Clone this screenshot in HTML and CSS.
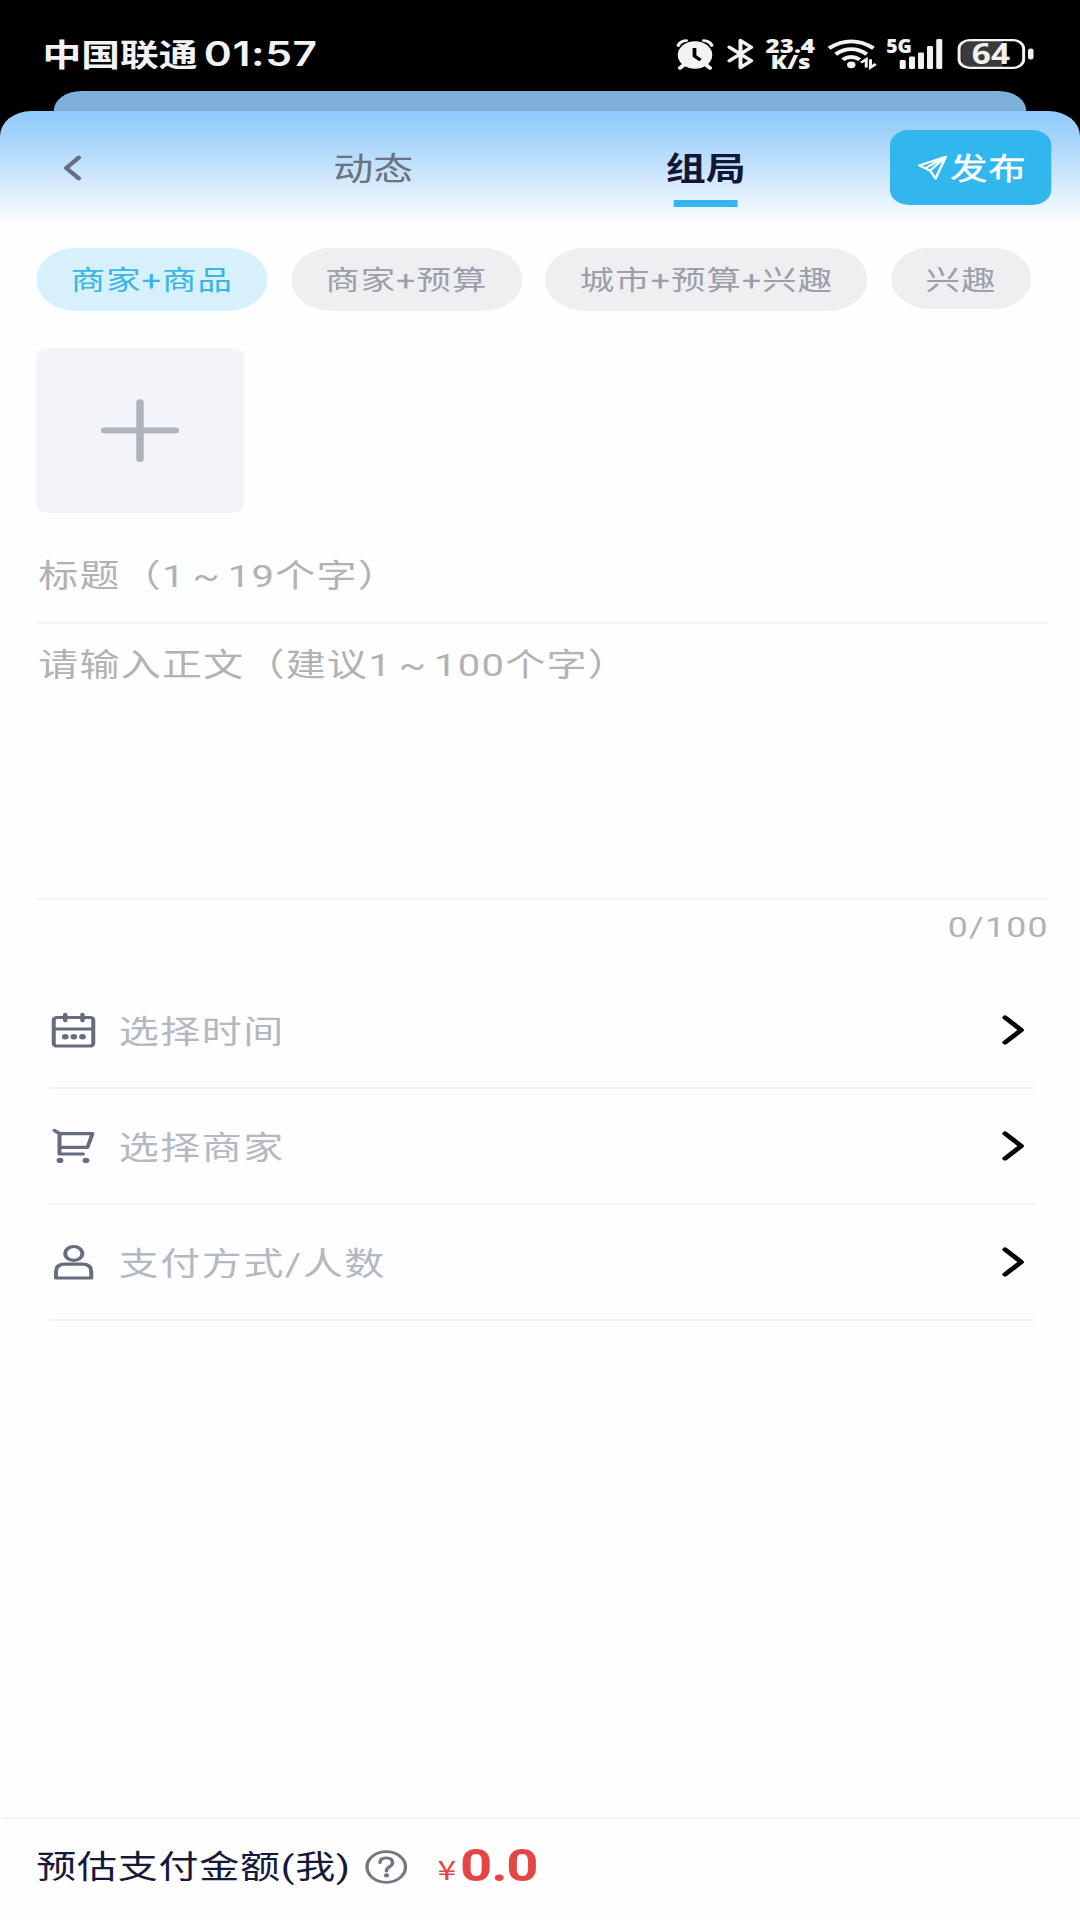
FILE: index.html
```html
<!DOCTYPE html>
<html lang="zh-CN">
<head>
<meta charset="utf-8">
<title>组局</title>
<link rel="stylesheet" href="styles.css">
</head>
<body>
<div class="stage">
  <div class="status">
    <span class="carrier">中国联通</span>
    <span class="clock">01:57</span>
    <div class="status-icons">
      <svg class="i-alarm" width="30" height="32" viewBox="0 0 30 32">
        <circle cx="15" cy="17" r="13.8" fill="#f2f2f2"/>
        <path d="M1.6 7.5Q3 3 8 2.6M28.4 7.5Q27 3 22 2.6" fill="none" stroke="#f2f2f2" stroke-width="2.8" stroke-linecap="round"/>
        <path d="M6 27l-3 3M24 27l3 3" stroke="#f2f2f2" stroke-width="3.4" stroke-linecap="round"/>
        <path d="M14.6 10v8l4.8 4.2" fill="none" stroke="#000" stroke-width="3"/>
      </svg>
      <svg class="i-bt" width="21" height="32" viewBox="0 0 21 32">
        <path d="M1.5 9.2L19 22.8 10.4 29.6V2.4L19 9.2 1.5 22.8" fill="none" stroke="#f2f2f2" stroke-width="3.2" stroke-linejoin="round" stroke-linecap="round"/>
      </svg>
      <svg class="i-speed" width="42" height="32" viewBox="0 0 42 32">
        <text class="net" x="0.5" y="14.8" textLength="39.5" lengthAdjust="spacingAndGlyphs">23.4</text>
        <text class="net" x="4.5" y="31" textLength="32" lengthAdjust="spacingAndGlyphs">K/s</text>
      </svg>
      <svg class="i-wifi" width="40" height="32" viewBox="0 0 40 32">
        <g fill="none" stroke="#f2f2f2" stroke-width="3.7">
          <path d="M1.2 10.2Q19 -3.6 36.8 10.2"/>
          <path d="M6.6 16.2Q19 6.2 31.4 16.2"/>
          <path d="M12.2 21.6Q19 16.4 25.8 21.6"/>
        </g>
        <circle cx="19" cy="26.8" r="3.4" fill="#f2f2f2"/>
        <path d="M26.8 24.6L31 21.2V29.6M38.6 26L34.4 29.4V21.2" fill="none" stroke="#f2f2f2" stroke-width="2.4"/>
      </svg>
      <svg class="i-signal" width="46" height="32" viewBox="0 0 46 32">
        <text x="0" y="15.2" class="net" textLength="20.5" lengthAdjust="spacingAndGlyphs">5G</text>
        <g fill="#f2f2f2">
          <rect x="10.8" y="22" width="4.8" height="9" rx="1.2"/>
          <rect x="18.2" y="18.4" width="4.8" height="12.6" rx="1.2"/>
          <rect x="25.4" y="14.4" width="4.8" height="16.6" rx="1.2"/>
          <rect x="32.6" y="8" width="4.8" height="23" rx="1.2"/>
          <rect x="40" y="1" width="4.8" height="30" rx="1.2"/>
        </g>
      </svg>
      <svg class="i-batt" width="62" height="32" viewBox="0 0 62 32">
        <path d="M11 3H36V29H11Q3 29 3 21V11Q3 3 11 3Z" fill="#3b3b3b"/>
        <rect x="1.3" y="2.1" width="51.6" height="27.8" rx="8.5" fill="none" stroke="#f2f2f2" stroke-width="2.4"/>
        <rect x="56.4" y="10.6" width="4.4" height="11" rx="2" fill="#f2f2f2"/>
        <text x="11.5" y="26" class="level" textLength="30.5" lengthAdjust="spacingAndGlyphs">64</text>
      </svg>
    </div>
  </div>

  <div class="sheet-back"></div>

  <main class="sheet">
    <header class="nav">
      <svg class="back" width="16" height="28" viewBox="0 0 16 28">
        <path d="M13 3.6L3 14l10 10.4" fill="none" stroke="#656e84" stroke-width="3.8" stroke-linecap="round" stroke-linejoin="round"/>
      </svg>
      <div class="tabs">
        <span class="tab">动态</span>
        <span class="tab active">组局</span>
      </div>
      <button class="publish">
        <svg width="24" height="26" viewBox="0 0 24 26">
          <path d="M1.4 10.5L22.6 1.8 14.4 23.6 10 15.6ZM22.6 1.8L6 13.2M22.6 1.8L10 15.6" fill="none" stroke="#fff" stroke-width="2" stroke-linejoin="round" stroke-linecap="round"/>
        </svg>
        <span>发布</span>
      </button>
    </header>

    <div class="chips">
      <span class="chip on">商家+商品</span>
      <span class="chip">商家+预算</span>
      <span class="chip wide">城市+预算+兴趣</span>
      <span class="chip small">兴趣</span>
    </div>

    <div class="upload">
      <svg width="64" height="66" viewBox="0 0 64 66">
        <path d="M32 4.2V61M3.8 32.6H60.2" stroke="#aeb2bb" stroke-width="6" stroke-linecap="round"/>
      </svg>
    </div>

    <div class="field title">标题（1 ~ 19个字）</div>
    <div class="field content">请输入正文（建议1 ~ 100个字）</div>
    <div class="counter">0/100</div>

    <ul class="rows">
      <li class="row">
        <svg class="icon" width="36" height="38" viewBox="0 0 36 38">
          <g fill="none" stroke="#666d7d" stroke-width="3.2">
            <rect x="2" y="6.5" width="31.6" height="28.5" rx="2.5"/>
            <path d="M2 18H33.6"/>
            <path d="M11.2 3.6v6M25 3.6v6" stroke-width="3.6" stroke-linecap="round"/>
          </g>
          <g fill="#666d7d"><circle cx="11.2" cy="25.7" r="2.7"/><circle cx="18.1" cy="25.7" r="2.7"/><circle cx="25" cy="25.7" r="2.7"/></g>
        </svg>
        <span>选择时间</span>
        <svg class="go" width="20" height="32" viewBox="0 0 20 32"><path d="M3 3.6L16 16 3 28.4" /></svg>
      </li>
      <li class="row">
        <svg class="icon" width="36" height="38" viewBox="0 0 36 38">
          <path d="M2.6 3.4L6.6 6.6H33L29 20.4H6.6M6.6 6.6V27H25.4" fill="none" stroke="#666d7d" stroke-width="3.2" stroke-linecap="round" stroke-linejoin="round"/>
          <g fill="#666d7d"><circle cx="7" cy="33.4" r="2.7"/><circle cx="27.8" cy="33.4" r="2.7"/></g>
        </svg>
        <span>选择商家</span>
        <svg class="go" width="20" height="32" viewBox="0 0 20 32"><path d="M3 3.6L16 16 3 28.4" /></svg>
      </li>
      <li class="row">
        <svg class="icon" width="36" height="38" viewBox="0 0 36 38">
          <g fill="none" stroke="#666d7d" stroke-width="3.2" stroke-linejoin="round">
            <circle cx="18" cy="10.4" r="6.9"/>
            <path d="M3.8 35V28.4Q3.8 21.2 11 21.2H24.8Q32 21.2 32 28.4V35Z"/>
          </g>
        </svg>
        <span>支付方式/人数</span>
        <svg class="go" width="20" height="32" viewBox="0 0 20 32"><path d="M3 3.6L16 16 3 28.4" /></svg>
      </li>
    </ul>

    <footer class="pay">
      <span class="pay-label">预估支付金额(我)</span>
      <svg class="help" width="34" height="36" viewBox="0 0 34 36">
        <circle cx="17" cy="18" r="15.4" fill="none" stroke="#727784" stroke-width="2.7"/>
        <path d="M12 13.8Q12 8.8 17 8.8T22 13.6Q22 16.4 19.4 18 17.2 19.4 17.2 22" fill="none" stroke="#727784" stroke-width="2.8" stroke-linecap="round"/>
        <circle cx="17.2" cy="26.4" r="2.1" fill="#727784"/>
      </svg>
      <span class="yen">¥</span><span class="sum">0.0</span>
    </footer>
  </main>
</div>
</body>
</html>
```
FILE: styles.css
```css
* { box-sizing: border-box; }
body {
  margin: 0;
  width: 1080px;
  height: 1920px;
  overflow: hidden;
  background: #000;
  font-family: Roboto, "Noto Sans CJK SC", sans-serif;
}
svg { display: block; flex: none; overflow: visible; }

/* The layout is 864 units wide and stretched to the full window width. */
.stage {
  width: 864px;
  height: 1920px;
  display: flex;
  flex-direction: column;
  transform: scaleX(1.25);
  transform-origin: 0 0;
  white-space: nowrap;
}

.status {
  height: 91px;
  padding: 16px 0 0 34px;
  display: flex;
  align-items: center;
  color: #f2f2f2;
  flex: none;
}
.carrier { width: 129px; font: 700 31px/40px "Noto Sans CJK SC", sans-serif; padding-bottom: 2px; }
.clock { font: 600 34px/40px Inter, sans-serif; letter-spacing: .5px; }
.status-icons { margin-left: auto; padding-right: 36px; display: flex; align-items: center; }
.i-bt { margin-left: 11px; }
.i-speed { margin-left: 9px; }
.i-wifi { margin-left: 8px; }
.i-signal { margin-left: 7px; }
.i-batt { margin-left: 11px; }
.net { font: 800 19.5px "Open Sans", sans-serif; fill: #f2f2f2; }
.level { font: 700 28px "Open Sans", sans-serif; fill: #f2f2f2; }

.sheet-back {
  height: 20px;
  flex: none;
  margin: 0 43px;
  background: #7eafd9;
  border-radius: 22px 22px 0 0 / 20px 20px 0 0;
}

.sheet {
  flex: 1;
  display: flex;
  flex-direction: column;
  background: linear-gradient(#8dcafb 0, #a8d6fb 30px, #d3e9fc 70px, #fefefe 114px);
  border-radius: 25px 25px 0 0;
}

.nav { height: 137px; padding: 19px 0 0 50px; display: flex; align-items: flex-start; flex: none; }
.back { margin-top: 24px; }
.tabs { width: 532px; margin-left: 99.6px; display: grid; grid-template-columns: 1fr 1fr; }
.tab {
  height: 80px;
  display: flex;
  flex-direction: column;
  align-items: center;
  font-size: 32px;
  line-height: 78px;
  color: #6b7282;
}
.tab.active { font-weight: 700; color: #121738; }
.tab.active::after { content: ""; width: 51px; height: 7px; margin-top: -8px; background: #31b5ea; flex: none; }
.publish {
  width: 129px;
  height: 75px;
  margin-left: 14.4px;
  padding: 0 0 0 22px;
  display: flex;
  align-items: center;
  gap: 2px;
  border: 0;
  border-radius: 15px;
  background: #31b7ee;
  color: #fff;
  font: 400 30px/40px "Noto Sans CJK SC", sans-serif;
  -webkit-text-stroke: .4px #fff;
}
.publish span { padding-bottom: 3px; letter-spacing: .6px; }

.chips { height: 100px; padding-left: 29px; display: flex; gap: 18.6px; align-items: flex-start; flex: none; }
.chip {
  width: 185px;
  height: 63px;
  border-radius: 32px;
  background: #efeff2;
  color: #9b9fa9;
  font-size: 27.5px;
  letter-spacing: .8px;
  line-height: 65px;
  text-align: center;
}
.chip.on { background: #d6f0fc; color: #3ab5e6; }
.chip.wide { width: 258px; }
.chip.small { width: 112px; height: 61px; }

.upload {
  width: 166px;
  height: 165px;
  margin-left: 29px;
  border-radius: 8px;
  background: #f3f4f9;
  display: grid;
  place-items: center;
  flex: none;
}

.field { margin: 0 26px 0 29px; padding-left: 1.6px; font-size: 32px; letter-spacing: 1px; word-spacing: -3.5px; color: #b2b2b2; border-bottom: 2px solid #f2f4f8; flex: none; }
.title { height: 111px; line-height: 126px; }
.content { height: 276px; line-height: 82px; }
.counter { height: 73px; padding-right: 25px; text-align: right; font-size: 28.5px; line-height: 56px; letter-spacing: 1px; color: #b2b2b2; flex: none; }

.rows { list-style: none; margin: 0 35px 0 39px; padding: 0; flex: none; }
.row { height: 116px; padding: 0 8px 0 2px; display: flex; align-items: center; border-bottom: 2px solid #f5f5f6; color: #b4b8c1; font-size: 32px; letter-spacing: 1.2px; }
.row span { margin-left: 18px; padding-bottom: 3px; flex: 1; }
.go path { fill: none; stroke: #000; stroke-width: 4.2; stroke-linecap: round; stroke-linejoin: round; }

.pay { height: 103px; margin: auto 0 0 2px; padding: 0 0 6px 27px; display: flex; align-items: center; border-top: 2px solid #f4f4f5; }
.pay-label { width: 263px; padding-bottom: 5px; color: #15193a; font-size: 32px; letter-spacing: .6px; }
.yen { width: 18px; margin: 5px 0 0 24px; color: #e54545; font: 27px/40px "Noto Sans CJK SC", sans-serif; }
.sum { color: #e54545; font-weight: 700; font-size: 45px; line-height: 50px; letter-spacing: -.9px; padding-bottom: 1px; }
```
